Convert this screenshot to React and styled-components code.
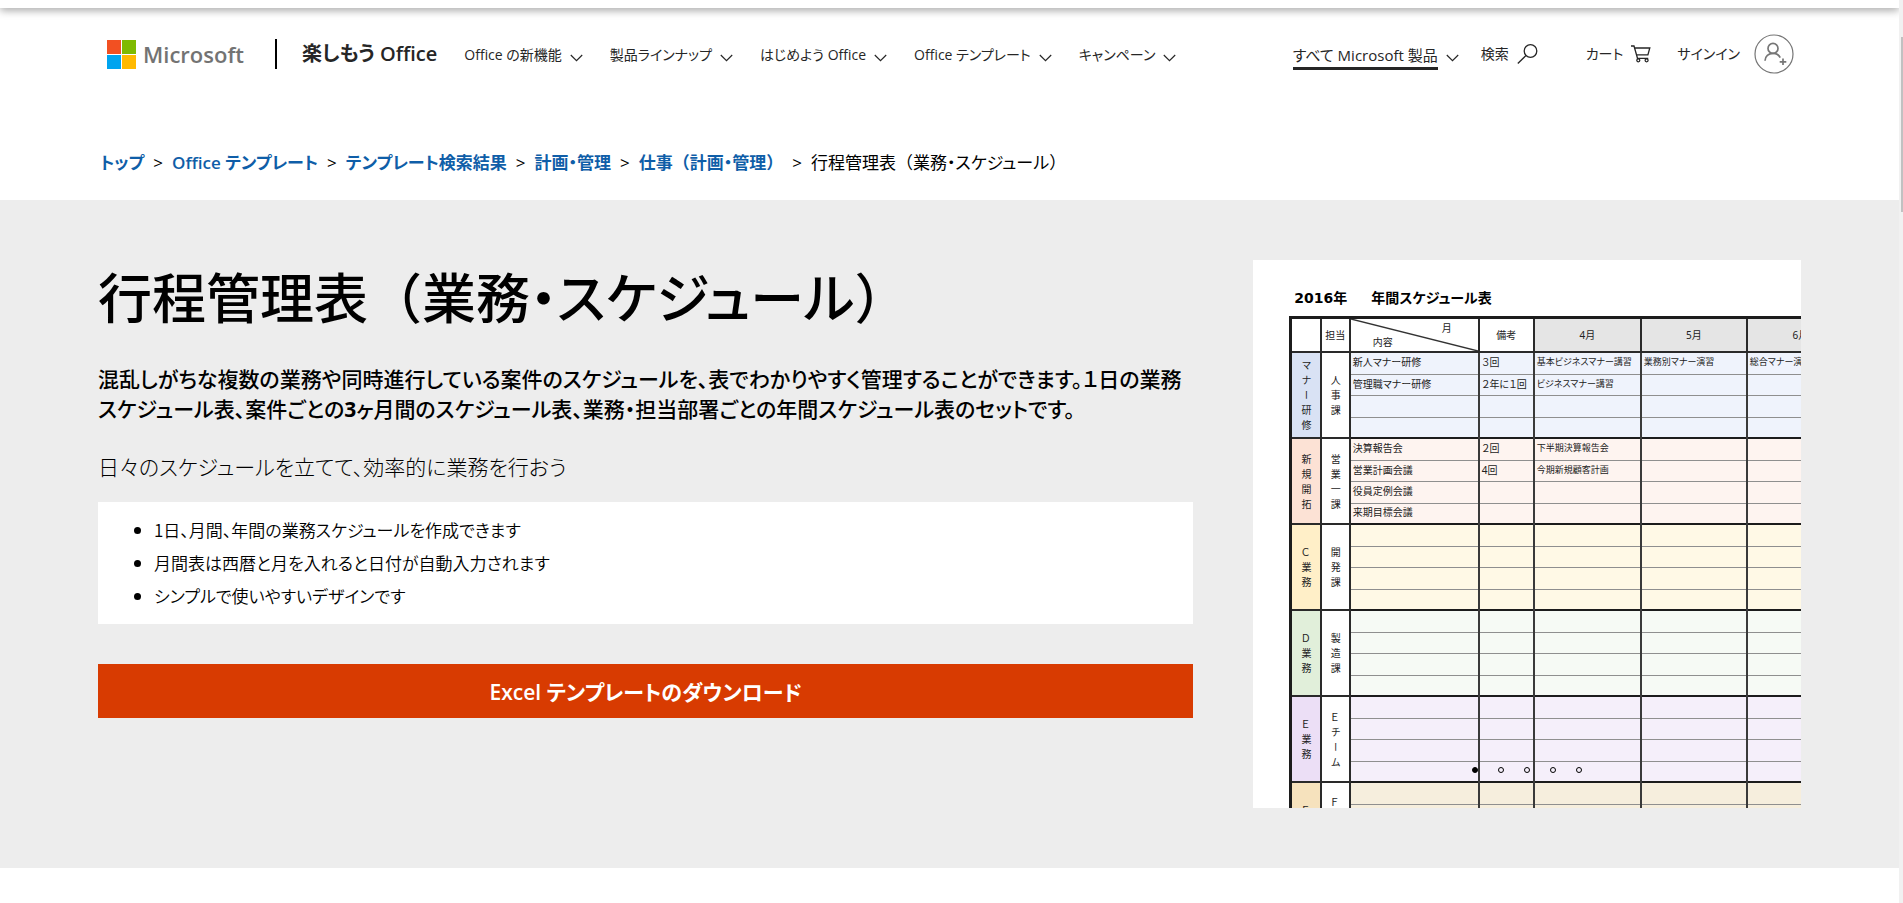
import React, { useState } from "react";
import styled, { createGlobalStyle } from "styled-components";

const GlobalStyle = createGlobalStyle`
  * {
    box-sizing: border-box;
  }

  body {
    margin: 0;
    padding-right: 4px;
    background: #fff;
    color: #000;
    font-family: "Open Sans", "Noto Sans CJK JP", sans-serif;
    font-feature-settings: "palt";
    overflow: hidden;
  }

  a {
    color: inherit;
    text-decoration: none;
  }

  button {
    margin: 0;
    padding: 0;
    border: 0;
    background: none;
    color: inherit;
    font: inherit;
    font-feature-settings: inherit;
    cursor: pointer;
  }
`;

const TopBar = styled.div`
  height: 8px;
  background: #fff;
  box-shadow: 0 2px 8px rgba(0, 0, 0, 0.4);
`;

const ScrollTrack = styled.div`
  position: fixed;
  top: 0;
  right: 0;
  bottom: 0;
  width: 4px;
  padding: 37px 0 0 2px;
  background: #f1f1f1;
`;

const ScrollThumb = styled.div`
  height: 175px;
  background: #c1c1c1;
`;

const Header = styled.header`
  display: flex;
  align-items: center;
  height: 92px;
  padding: 0 105px 0 107px;
  color: #262626;
  font-size: 14px;
  line-height: 20px;
  white-space: nowrap;
`;

const Logo = styled.a`
  display: flex;
  align-items: center;
  gap: 7px;
  color: #737373;
  font-size: 22px;
  font-weight: 600;
  line-height: 30px;
`;

const Divider = styled.span`
  width: 2px;
  height: 30px;
  margin: 0 25px 0 31px;
  background: #000;
`;

const SiteName = styled.a`
  font-size: 20px;
  font-weight: 600;
  line-height: 30px;
`;

const Nav = styled.nav`
  display: flex;
  gap: 27px;
  margin-left: 27px;
`;

const NavButton = styled.button`
  display: flex;
  align-items: center;
  gap: 8px;
`;

const NavLabel = styled.span`
  padding: 4px 0 2px;
  border-bottom: 3px solid ${(props) => (props.$current ? "#262626" : "transparent")};
  border-top: 3px solid transparent;
  font-size: ${(props) => (props.$current ? 15 : 14)}px;
`;

const ChevronSvg = styled.svg`
  margin-top: 7px;
`;

const Tools = styled.div`
  display: flex;
  align-items: center;
  margin-left: auto;
`;

const ToolLink = styled.a`
  display: flex;
  align-items: center;
  gap: ${(props) => props.$gap || 8}px;
  margin-left: ${(props) => props.$space}px;
`;

const Breadcrumb = styled.nav`
  display: flex;
  align-items: center;
  gap: 9px;
  height: 100px;
  padding: 26px 100px 0;
  font-size: 17px;
  line-height: 24px;
  white-space: nowrap;

  a {
    color: #0f5ea8;
    font-weight: 600;
  }
`;

// brackets keep their full em box, the kana around them are set tight
const Bracket = styled.span`
  font-feature-settings: normal;
`;

const Hero = styled.main`
  display: grid;
  grid-template-columns: 2fr 1fr;
  gap: 60px;
  padding: 60px 98px;
  background: #ededed;
`;

const Title = styled.h1`
  margin: 0;
  font-size: 54px;
  font-weight: 500;
  line-height: 76px;
`;

const Lead = styled.p`
  margin: 28px 0 0;
  font-size: 21px;
  font-weight: 500;
  line-height: 30px;

  b {
    font-weight: 700;
  }
`;

const SubTitle = styled.h2`
  margin: 28px 0 0;
  font-size: 21px;
  font-weight: 300;
  line-height: 30px;
`;

const Features = styled.ul`
  margin: 20px 0 0;
  padding: 11px 0 12px 56px;
  background: #fff;
  font-family: "Noto Sans CJK JP", sans-serif;
  font-size: 17px;
  font-weight: 350;
  line-height: 33px;
`;

const Download = styled.button`
  width: 100%;
  height: 54px;
  margin-top: 40px;
  background: #d83b01;
  color: #fff;
  font-size: 21px;
  font-weight: 600;
`;

const Preview = styled.section`
  position: relative;
  aspect-ratio: 1;
  overflow: hidden;
  background: #fff;
`;

const SheetTitle = styled.h3`
  display: flex;
  gap: 24px;
  margin: 0;
  padding: 28px 0 0 41px;
  font-family: "DejaVu Sans", "Noto Sans CJK JP", sans-serif;
  font-size: 14px;
  font-weight: 700;
  line-height: 20px;
`;

const Sheet = styled.table`
  width: 670px;
  margin: 8px 0 0 36px;
  border-collapse: collapse;
  border: 3px solid #1c1c1c;
  table-layout: fixed;
  color: #222;
  font-family: "Noto Sans", "Noto Sans CJK JP", sans-serif;
  font-size: 10px;
  line-height: 14px;
  white-space: nowrap;
`;

const Col = styled.col`
  width: ${(props) => props.$width}px;
`;

const HeadRow = styled.tr`
  height: 34px;
`;

const HeadCell = styled.th`
  padding: 0;
  border: 2px solid #2a2a2a;
  background: ${(props) => (props.$month ? "#e5e5e5" : "#fff")};
  font-weight: 400;
`;

const Corner = styled.div`
  position: relative;
  display: flex;
  flex-direction: column;
  justify-content: space-between;
  height: 32px;
  padding: 2px 26px 2px 22px;
  text-align: left;

  span:first-of-type {
    align-self: flex-end;
  }

  svg {
    position: absolute;
    inset: 0;
    width: 100%;
    height: 100%;
  }
`;

const Row = styled.tr`
  height: ${(props) => props.$height}px;
  border-top: ${(props) => (props.$first ? "2px solid #1c1c1c" : "1px solid #8f8f8f")};
`;

const GroupCell = styled.th`
  padding: 0;
  border: 2px solid #2a2a2a;
  background: ${(props) => props.$color};
  font-weight: 400;
`;

const Stack = styled.div`
  display: flex;
  flex-direction: column;
  align-items: center;
  gap: 5px;

  span {
    height: 10px;
    line-height: 10px;
    writing-mode: vertical-rl;
    text-orientation: upright;
  }
`;

const Cell = styled.td`
  padding: 0 0 2px 2px;
  border-left: 2px solid #3a3a3a;
  background: ${(props) => props.$color};
  font-size: ${(props) => (props.$month ? 9 : 10)}px;
`;

const Dots = styled.div`
  position: absolute;
  right: 0;
  bottom: 35px;
  left: 0;
  display: flex;
  justify-content: center;
  gap: 20px;
`;

const Dot = styled.button`
  width: 6px;
  height: 6px;
  border: 1px solid #000;
  border-radius: 50%;
  background: ${(props) => (props.$active ? "#000" : "transparent")};
`;

const navItems = [
  "Office の新機能",
  "製品ラインナップ",
  "はじめよう Office",
  "Office テンプレート",
  "キャンペーン",
];

const crumbs = [
  "トップ",
  "Office テンプレート",
  "テンプレート検索結果",
  "計画・管理",
  "仕事（計画・管理）",
];

const templateName = "行程管理表（業務・スケジュール）";

const features = [
  "1日、月間、年間の業務スケジュールを作成できます",
  "月間表は西暦と月を入れると日付が自動入力されます",
  "シンプルで使いやすいデザインです",
];

const colWidths = [30, 29, 129, 55, 107, 106, 107, 107];
const rowHeights = [22, 21, 22, 21];

const groups = [
  {
    name: "マナー研修",
    team: "人事課",
    dark: "#d9e2f4",
    light: "#eff3fc",
    rows: [
      ["新人マナー研修", "３回", "基本ビジネスマナー講習", "業務別マナー演習", "総合マナー演習"],
      ["管理職マナー研修", "２年に１回", "ビジネスマナー講習"],
    ],
  },
  {
    name: "新規開拓",
    team: "営業一課",
    dark: "#fce2d5",
    light: "#fef4f0",
    rows: [
      ["決算報告会", "２回", "下半期決算報告会"],
      ["営業計画会議", "4回", "今期新規顧客計画"],
      ["役員定例会議"],
      ["来期目標会議"],
    ],
  },
  { name: "Ｃ業務", team: "開発課", dark: "#ffefc8", light: "#fff9e6", rows: [] },
  { name: "Ｄ業務", team: "製造課", dark: "#e1efda", light: "#f6faf5", rows: [] },
  { name: "Ｅ業務", team: "Ｅチーム", dark: "#ecdff6", light: "#f5effa", rows: [] },
  { name: "Ｆ業務", team: "Ｆチーム", dark: "#f6e2bd", light: "#f6eedd", rows: [] },
];

function MicrosoftMark() {
  return (
    <svg width="29" height="29" viewBox="0 0 29 29" aria-hidden="true">
      <path fill="#f25022" d="M0 0h14v14H0z" />
      <path fill="#7fba00" d="M15 0h14v14H15z" />
      <path fill="#00a4ef" d="M0 15h14v14H0z" />
      <path fill="#ffb900" d="M15 15h14v14H15z" />
    </svg>
  );
}

function Chevron() {
  return (
    <ChevronSvg width="13" height="8" viewBox="0 0 13 8" aria-hidden="true">
      <path d="M.8 1l5.7 5.7L12.2 1" fill="none" stroke="currentColor" strokeWidth="1.2" />
    </ChevronSvg>
  );
}

function SearchIcon() {
  return (
    <svg width="21" height="20" viewBox="0 0 21 20" fill="none" stroke="#262626" strokeWidth="1.3" aria-hidden="true">
      <circle cx="13.5" cy="7" r="6.3" />
      <path d="M9 11.5L.8 19.5" />
    </svg>
  );
}

function CartIcon() {
  return (
    <svg width="20" height="18" viewBox="0 0 20 18" fill="none" stroke="#262626" strokeWidth="1.3" aria-hidden="true">
      <path d="M0 1h3l3.5 12.3h10.7M3.6 3h15.2l-1.900 6.800H5.600" />
      <circle cx="7.3" cy="15.3" r="1.5" />
      <circle cx="15.6" cy="15.3" r="1.5" />
    </svg>
  );
}

function AccountIcon() {
  return (
    <svg width="40" height="40" viewBox="0 0 40 40" fill="none" stroke="#767676" strokeWidth="1.2" aria-hidden="true">
      <circle cx="20" cy="20" r="19" />
      <g strokeWidth="1.7">
        <circle cx="19" cy="14.4" r="5" />
        <path d="M11 26.8c0-4.4 3.6-7.4 8-7.4 3.2 0 6 1.6 7.2 4.3" />
        <path d="M29 24.5v6.600M25.700 27.800h6.600" />
      </g>
    </svg>
  );
}

function Bracketed({ text }) {
  return text
    .split(/([（）])/)
    .map((part, i) => (i % 2 ? <Bracket key={i}>{part}</Bracket> : part));
}

function Stacked({ text }) {
  return (
    <Stack>
      {text.split("").map((char, i) => (
        <span key={i}>{char}</span>
      ))}
    </Stack>
  );
}

function ScheduleSheet() {
  return (
    <Sheet>
      <colgroup>
        {colWidths.map((width, i) => (
          <Col key={i} $width={width} />
        ))}
      </colgroup>
      <thead>
        <HeadRow>
          <HeadCell />
          <HeadCell>担当</HeadCell>
          <HeadCell>
            <Corner>
              <svg viewBox="0 0 128 32" preserveAspectRatio="none" aria-hidden="true">
                <path d="M0 0l128 32" stroke="#333" strokeWidth="1.4" />
              </svg>
              <span>月</span>
              <span>内容</span>
            </Corner>
          </HeadCell>
          <HeadCell>備考</HeadCell>
          <HeadCell $month>4月</HeadCell>
          <HeadCell $month>5月</HeadCell>
          <HeadCell $month>6月</HeadCell>
        </HeadRow>
      </thead>
      <tbody>
        {groups.map((group) =>
          rowHeights.map((height, i) => (
            <Row key={group.name + i} $height={height} $first={i === 0}>
              {i === 0 && (
                <>
                  <GroupCell rowSpan={4} $color={group.dark}>
                    <Stacked text={group.name} />
                  </GroupCell>
                  <GroupCell rowSpan={4} $color="#fff">
                    <Stacked text={group.team} />
                  </GroupCell>
                </>
              )}
              {[0, 1, 2, 3, 4].map((col) => (
                <Cell key={col} $color={group.light} $month={col > 1}>
                  {group.rows[i]?.[col]}
                </Cell>
              ))}
            </Row>
          ))
        )}
      </tbody>
    </Sheet>
  );
}

export default function App() {
  const [slide, setSlide] = useState(0);

  return (
    <>
      <GlobalStyle />
      <TopBar />
      <Header>
        <Logo href="#">
          <MicrosoftMark />
          Microsoft
        </Logo>
        <Divider />
        <SiteName href="#">楽しもう Office</SiteName>
        <Nav>
          {navItems.map((item) => (
            <NavButton key={item}>
              <NavLabel>{item}</NavLabel>
              <Chevron />
            </NavButton>
          ))}
        </Nav>
        <Tools>
          <NavButton>
            <NavLabel $current>すべて Microsoft 製品</NavLabel>
            <Chevron />
          </NavButton>
          <ToolLink href="#" $space={22}>
            検索
            <SearchIcon />
          </ToolLink>
          <ToolLink href="#" $space={48}>
            カート
            <CartIcon />
          </ToolLink>
          <ToolLink href="#" $space={26} $gap={14}>
            サインイン
            <AccountIcon />
          </ToolLink>
        </Tools>
      </Header>
      <Breadcrumb>
        {crumbs.map((crumb) => (
          <React.Fragment key={crumb}>
            <a href="#">
              <Bracketed text={crumb} />
            </a>
            <span>&gt;</span>
          </React.Fragment>
        ))}
        <span>
          <Bracketed text={templateName} />
        </span>
      </Breadcrumb>
      <Hero>
        <div>
          <Title>
            <Bracketed text={templateName} />
          </Title>
          <Lead>
            混乱しがちな複数の業務や同時進行している案件のスケジュールを、表でわかりやすく管理することができます。１日の業務スケジュール表、案件ごとの<b>3</b>ヶ月間のスケジュール表、業務・担当部署ごとの年間スケジュール表のセットです。
          </Lead>
          <SubTitle>日々のスケジュールを立てて、効率的に業務を行おう</SubTitle>
          <Features>
            {features.map((feature) => (
              <li key={feature}>{feature}</li>
            ))}
          </Features>
          <Download>Excel テンプレートのダウンロード</Download>
        </div>
        <Preview>
          <SheetTitle>
            <span>2016年</span>
            <span>年間スケジュール表</span>
          </SheetTitle>
          <ScheduleSheet />
          <Dots>
            {[0, 1, 2, 3, 4].map((n) => (
              <Dot
                key={n}
                $active={n === slide}
                aria-label={`スライド ${n + 1}`}
                onClick={() => setSlide(n)}
              />
            ))}
          </Dots>
        </Preview>
      </Hero>
      <ScrollTrack>
        <ScrollThumb />
      </ScrollTrack>
    </>
  );
}
